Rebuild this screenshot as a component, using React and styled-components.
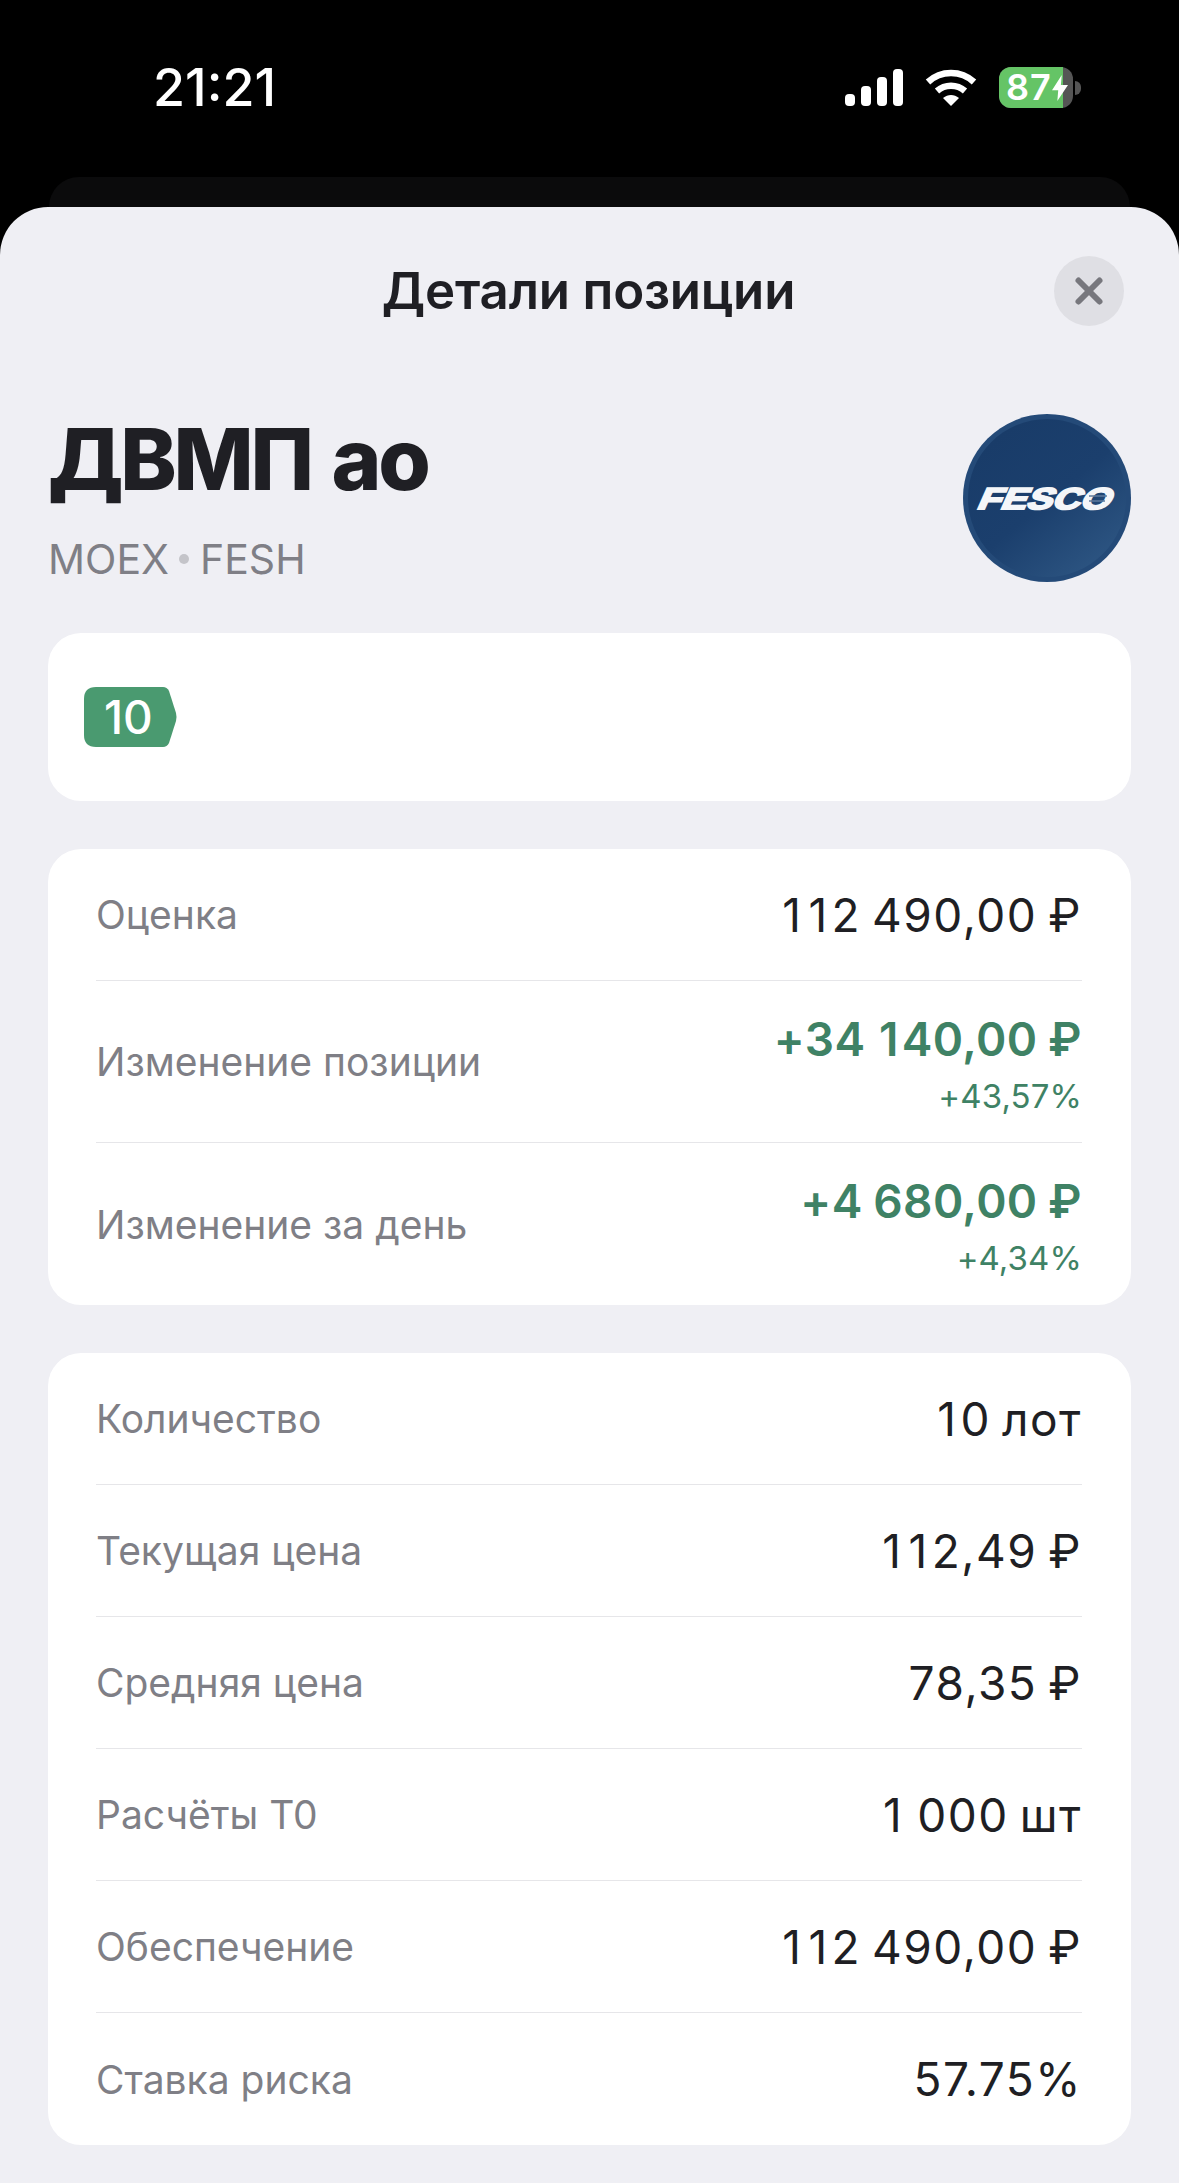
import React from 'react'
import styled, { createGlobalStyle } from 'styled-components'
import { X } from 'lucide-react'

const GlobalStyle = createGlobalStyle`
  html, body {
    margin: 0;
    padding: 0;
    background: #000;
  }
  body {
    font-family: Inter, "Noto Sans", sans-serif;
  }
`

const Screen = styled.div`
  width: 1179px;
  height: 2183px;
  overflow: hidden;
  background: #000;
`
const StatusBar = styled.div`
  height: 177px;
  display: flex;
  justify-content: space-between;
  align-items: flex-start;
  padding: 0 98px 0 153px;
  box-sizing: border-box;
`
const Time = styled.div`
  margin-top: 59px;
  font-size: 52px;
  line-height: 58px;
  font-weight: 500;
  color: #fff;
`
const StatusIcons = styled.div`
  display: flex;
  align-items: center;
  gap: 22px;
  margin-top: 67px;
`
const Battery = styled.div`
  position: relative;
  width: 74px;
  height: 41px;
  border-radius: 12px;
  background: #555;
  display: flex;
`
const BatteryFill = styled.div`
  width: 64px;
  border-radius: 12px 0 0 12px;
  background: #65c466;
  color: #fff;
  font-size: 36px;
  line-height: 41px;
  font-weight: 600;
  letter-spacing: 1px;
  padding-left: 7px;
  box-sizing: border-box;
`
const BatteryBolt = styled.svg`
  position: absolute;
  left: 53px;
  top: 8px;
`
const BatteryWrap = styled.div`
  display: flex;
  align-items: center;
  gap: 2px;
`
const BatteryNub = styled.div`
  width: 6px;
  height: 14px;
  background: #555;
  border-radius: 0 7px 7px 0;
`
const BackCard = styled.div`
  height: 30px;
  margin: 0 49px;
  background: #0b0b0c;
  border-radius: 30px 30px 0 0;
`
const Sheet = styled.div`
  height: 1976px;
  background: #efeff4;
  border-radius: 48px 48px 0 0;
  padding: 49px 48px 0;
  box-sizing: border-box;
`
const SheetHeader = styled.div`
  position: relative;
  height: 70px;
  display: flex;
  align-items: center;
  justify-content: center;
`
const SheetTitle = styled.div`
  margin-right: 2px;
  font-size: 51px;
  line-height: 70px;
  font-weight: 600;
  letter-spacing: -0.2px;
  color: #1f1f24;
`
const CloseButton = styled.button`
  position: absolute;
  right: 7px;
  top: 0;
  width: 70px;
  height: 70px;
  border: 0;
  padding: 0;
  border-radius: 50%;
  background: #dfdfe4;
  color: #77777d;
  display: flex;
  align-items: center;
  justify-content: center;
`
const Instrument = styled.div`
  display: flex;
  justify-content: space-between;
  align-items: flex-start;
  margin-top: 84px;
`
const InstrumentName = styled.h1`
  margin: 0;
  font-size: 85px;
  line-height: 100px;
  font-weight: 800;
  letter-spacing: -3.2px;
  word-spacing: 5px;
  color: #1f1f24;
`
const InstrumentMeta = styled.div`
  margin-top: 24px;
  font-size: 41px;
  line-height: 50px;
  font-weight: 400;
  color: #7f7f86;
  display: flex;
  align-items: center;
`
const MetaDot = styled.span`
  width: 10px;
  height: 10px;
  margin: 0 11px 0 10px;
  border-radius: 50%;
  background: #c4c4c9;
`
const LogoMark = styled.svg`
  display: block;
  flex: none;
  margin-top: 4px;
`
const Card = styled.div`
  background: #fff;
  border-radius: 33px;
  margin-top: ${p => p.$gap || 48}px;
`
const BadgeCard = styled(Card)`
  height: 168px;
  display: flex;
  align-items: center;
  padding-left: 36px;
`
const Badge = styled.div`
  width: 93px;
  height: 60px;
  background: #4a9a70;
  clip-path: path('M12 0 H79 Q83 0 85 4 L92 26 Q93 30 92 34 L85 56 Q83 60 79 60 H12 Q0 60 0 48 V12 Q0 0 12 0 Z');
  color: #fff;
  font-size: 46px;
  line-height: 60px;
  font-weight: 500;
  padding-left: 20px;
  box-sizing: border-box;
`
const Row = styled.div`
  height: ${p => p.$tall ? 162 : 132}px;
  margin: 0 49px 0 48px;
  display: flex;
  align-items: center;
  justify-content: space-between;
  box-sizing: border-box;
  border-bottom: 1px solid #e6e6e9;
  &:last-child {
    border-bottom: 0;
  }
`
const Label = styled.div`
  font-size: 39px;
  font-weight: 400;
  color: #7f7f86;
`
const Values = styled.div`
  text-align: right;
  padding-top: 3px;
`
const Value = styled.div`
  font-size: 46px;
  line-height: 56px;
  font-weight: 400;
  letter-spacing: 1.5px;
  word-spacing: -3.5px;
  color: #1f1f24;
`
const GainValue = styled(Value)`
  font-weight: 600;
  letter-spacing: 0.4px;
  word-spacing: -1.5px;
  color: #3f8265;
`
const DigitOne = styled.span`
  margin: 0 3px;
`
const GainPercent = styled.div`
  margin-top: 9px;
  font-size: 33px;
  line-height: 40px;
  letter-spacing: 0.1px;
  color: #3f8265;
`

const summaryRows = [
  { label: 'Изменение позиции', value: '+34 140,00 ₽', percent: '+43,57%' },
  { label: 'Изменение за день', value: '+4 680,00 ₽', percent: '+4,34%' },
]

const detailRows = [
  { label: 'Количество', value: '10 лот' },
  { label: 'Текущая цена', value: '112,49 ₽' },
  { label: 'Средняя цена', value: '78,35 ₽' },
  { label: 'Расчёты Т0', value: '1 000 шт' },
  { label: 'Обеспечение', value: '112 490,00 ₽' },
  { label: 'Ставка риска', value: '57.75%' },
]

// the app's font sets the digit 1 wider than Inter does
const spacedOnes = text =>
  text.split(/(1)/).map((part, i) => (part === '1' ? <DigitOne key={i}>1</DigitOne> : part))

const SignalIcon = () => (
  <svg width="58" height="37" viewBox="0 0 58 37" fill="#fff">
    <rect x="0" y="25" width="10" height="12" rx="4" />
    <rect x="16" y="17" width="10" height="20" rx="4" />
    <rect x="32" y="8" width="10" height="29" rx="4" />
    <rect x="48" y="0" width="10" height="37" rx="4" />
  </svg>
)

const WifiIcon = () => (
  <svg width="52" height="37" viewBox="0 0 52 37" fill="none" stroke="#fff" strokeWidth="6.5">
    <path d="M3 13 C16 1 36 1 49 13" />
    <path d="M12 22 C20 15 32 15 40 22" />
    <path d="M18 29 L26 37 L34 29 C29 25 23 25 18 29 Z" fill="#fff" stroke="none" />
  </svg>
)

const FescoLogo = () => (
  <LogoMark width="168" height="168" viewBox="0 0 168 168">
    <defs>
      <linearGradient id="fescoFill" x1="0.2" y1="0.1" x2="0.85" y2="0.9">
        <stop offset="0" stopColor="#193c69" />
        <stop offset="0.5" stopColor="#1b3f6d" />
        <stop offset="1" stopColor="#2c5481" />
      </linearGradient>
    </defs>
    <circle cx="84" cy="84" r="84" fill="#244a78" />
    <circle cx="84" cy="84" r="79" fill="url(#fescoFill)" />
    <g transform="translate(58 0) skewX(-24)">
      <text
        x="-3"
        y="95"
        textLength="133"
        lengthAdjust="spacingAndGlyphs"
        fontFamily="Liberation Sans, sans-serif"
        fontSize="30"
        fontWeight="700"
        fill="#f4f6f9"
        stroke="#f4f6f9"
        strokeWidth="2"
      >
        FESCO
      </text>
    </g>
    <path d="M126 82 H144 M126 87 H142" stroke="#5f7c9e" strokeWidth="1.5" />
  </LogoMark>
)

const App = () => {
  return (
    <Screen>
      <GlobalStyle />
      <StatusBar>
        <Time>21:21</Time>
        <StatusIcons>
          <SignalIcon />
          <WifiIcon />
          <BatteryWrap>
            <Battery>
              <BatteryFill>87</BatteryFill>
              <BatteryBolt width="16" height="26" viewBox="0 0 18 29" fill="#fff">
                <path d="M11 0 L0 17 H7 L6 29 L18 11 H10 Z" />
              </BatteryBolt>
            </Battery>
            <BatteryNub />
          </BatteryWrap>
        </StatusIcons>
      </StatusBar>
      <BackCard />
      <Sheet>
        <SheetHeader>
          <SheetTitle>Детали позиции</SheetTitle>
          <CloseButton aria-label="Закрыть">
            <X size={42} strokeWidth={3.4} />
          </CloseButton>
        </SheetHeader>
        <Instrument>
          <div>
            <InstrumentName>ДВМП ао</InstrumentName>
            <InstrumentMeta>MOEX<MetaDot />FESH</InstrumentMeta>
          </div>
          <FescoLogo />
        </Instrument>
        <BadgeCard $gap={49}>
          <Badge>10</Badge>
        </BadgeCard>
        <Card>
          <Row>
            <Label>Оценка</Label>
            <Value>{spacedOnes('112 490,00 ₽')}</Value>
          </Row>
          {summaryRows.map(row => (
            <Row key={row.label} $tall>
              <Label>{row.label}</Label>
              <Values>
                <GainValue>{spacedOnes(row.value)}</GainValue>
                <GainPercent>{row.percent}</GainPercent>
              </Values>
            </Row>
          ))}
        </Card>
        <Card>
          {detailRows.map(row => (
            <Row key={row.label}>
              <Label>{row.label}</Label>
              <Value>{spacedOnes(row.value)}</Value>
            </Row>
          ))}
        </Card>
      </Sheet>
    </Screen>
  )
}

export default App
